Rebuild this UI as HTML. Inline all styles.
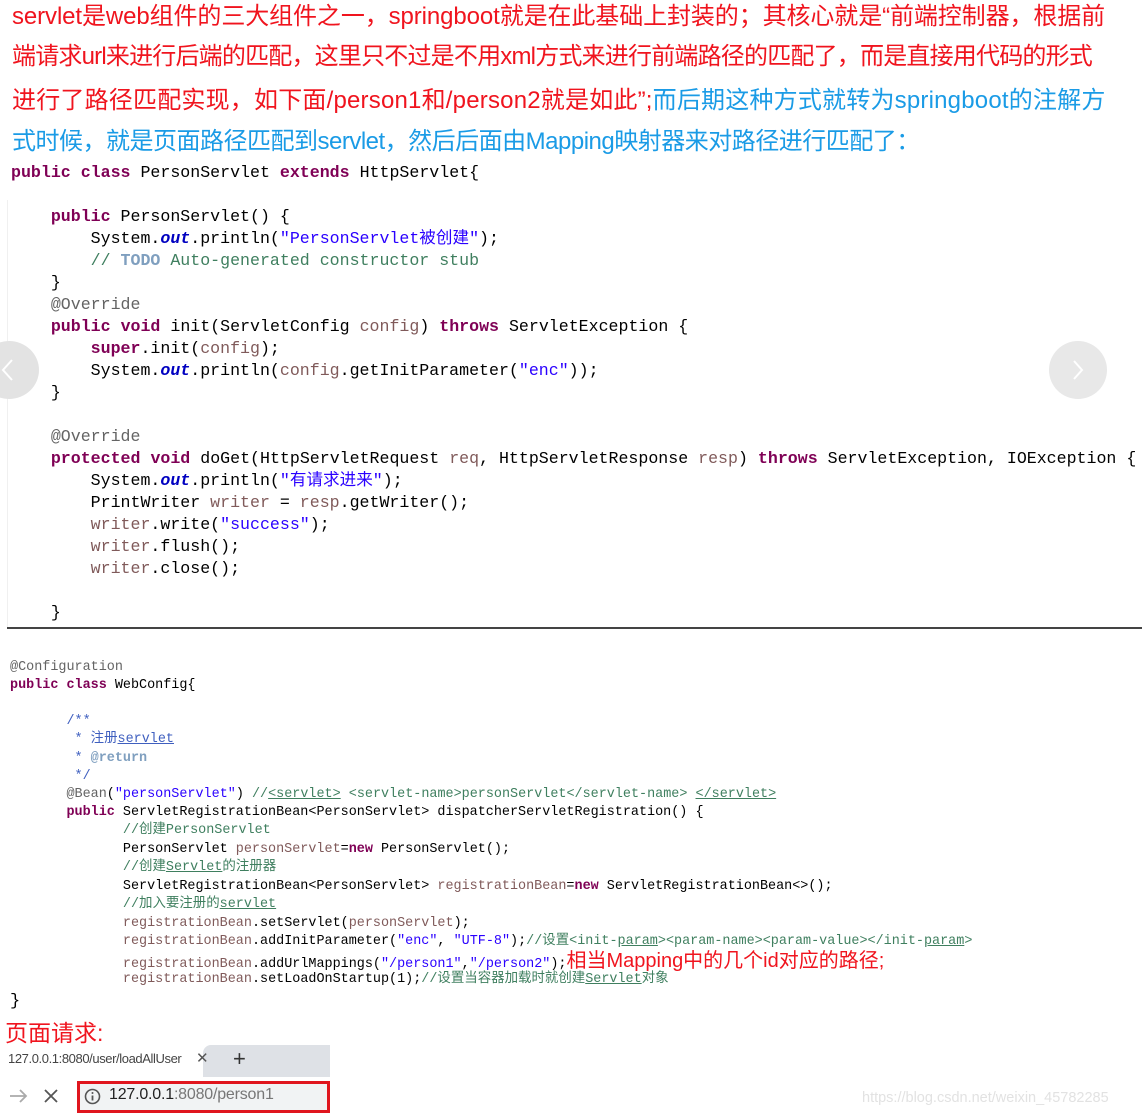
<!DOCTYPE html>
<html><head><meta charset="utf-8">
<style>
*{margin:0;padding:0;box-sizing:border-box}
body{width:1142px;height:1117px;background:#fff;position:relative;overflow:hidden;font-family:"Liberation Sans","Noto Sans CJK SC",sans-serif}
.h{position:absolute;left:12px;font-size:24px;white-space:nowrap;line-height:30px}
.r{color:#f0141e}.b{color:#1a9be6}
.c1{position:absolute;left:11px;font-family:"Liberation Mono","Noto Sans CJK SC",monospace;font-size:16.6px;line-height:22px;height:22px;white-space:pre;color:#000}
.c2{position:absolute;left:10px;font-family:"Liberation Mono","Noto Sans CJK SC",monospace;font-size:13.45px;line-height:18px;height:18px;white-space:pre;color:#000}
.k{color:#7f0055;font-weight:bold}
.s{color:#2a00ff}
.cm{color:#3f7f5f}
.f{color:#0000c0;font-style:italic;font-weight:bold}
.v{color:#6a3e3e;opacity:.85}
.a{color:#646464}
.jd{color:#3f5fbf}
.tg{color:#7f9fbf;font-weight:bold}
.u{text-decoration:underline}
.td{color:#7f9fbf;font-weight:bold}
</style></head><body>
<div class="h r" style="top:2px;letter-spacing:-0.1px">servlet是web组件的三大组件之一，springboot就是在此基础上封装的；其核心就是“前端控制器，根据前</div>
<div class="h r" style="top:42px;letter-spacing:-0.8px">端请求url来进行后端的匹配，这里只不过是不用xml方式来进行前端路径的匹配了，而是直接用代码的形式</div>
<div class="h" style="top:86px;letter-spacing:0.2px"><span class="r">进行了路径匹配实现，如下面/person1和/person2就是如此”;</span><span class="b">而后期这种方式就转为springboot的注解方</span></div>
<div class="h b" style="top:127px;letter-spacing:-0.5px">式时候，就是页面路径匹配到servlet，然后后面由Mapping映射器来对路径进行匹配了：</div>

<div style="position:absolute;left:7px;top:200px;width:1px;height:428px;background:#f0f0f0"></div>
<div class="c1" style="top:162px"><span class="k">public</span> <span class="k">class</span> PersonServlet <span class="k">extends</span> HttpServlet{</div>
<div class="c1" style="top:206px">    <span class="k">public</span> PersonServlet() {</div>
<div class="c1" style="top:228px">        System.<span class="f">out</span>.println(<span class="s">"PersonServlet被创建"</span>);</div>
<div class="c1" style="top:250px">        <span class="cm">// </span><span class="td">TODO</span><span class="cm"> Auto-generated constructor stub</span></div>
<div class="c1" style="top:272px">    }</div>
<div class="c1" style="top:294px">    <span class="a">@Override</span></div>
<div class="c1" style="top:316px">    <span class="k">public</span> <span class="k">void</span> init(ServletConfig <span class="v">config</span>) <span class="k">throws</span> ServletException {</div>
<div class="c1" style="top:338px">        <span class="k">super</span>.init(<span class="v">config</span>);</div>
<div class="c1" style="top:360px">        System.<span class="f">out</span>.println(<span class="v">config</span>.getInitParameter(<span class="s">"enc"</span>));</div>
<div class="c1" style="top:382px">    }</div>
<div class="c1" style="top:426px">    <span class="a">@Override</span></div>
<div class="c1" style="top:448px">    <span class="k">protected</span> <span class="k">void</span> doGet(HttpServletRequest <span class="v">req</span>, HttpServletResponse <span class="v">resp</span>) <span class="k">throws</span> ServletException, IOException {</div>
<div class="c1" style="top:470px">        System.<span class="f">out</span>.println(<span class="s">"有请求进来"</span>);</div>
<div class="c1" style="top:492px">        PrintWriter <span class="v">writer</span> = <span class="v">resp</span>.getWriter();</div>
<div class="c1" style="top:514px">        <span class="v">writer</span>.write(<span class="s">"success"</span>);</div>
<div class="c1" style="top:536px">        <span class="v">writer</span>.flush();</div>
<div class="c1" style="top:558px">        <span class="v">writer</span>.close();</div>
<div class="c1" style="top:602px">    }</div>
<div style="position:absolute;left:7px;top:627px;width:1135px;height:2px;background:#444"></div>

<div style="position:absolute;left:-21px;top:341px;width:60px;height:58px;border-radius:50%;background:#e3e3e3"></div>
<svg style="position:absolute;left:0;top:358px" width="20" height="26"><path d="M12 2 L3 12 L12 22" stroke="#fff" stroke-width="2" fill="none"/></svg>
<div style="position:absolute;left:1049px;top:341px;width:58px;height:58px;border-radius:50%;background:#e8e8e8"></div>
<svg style="position:absolute;left:1070px;top:359px" width="16" height="24"><path d="M4 2 L12 11 L4 20" stroke="#fff" stroke-width="2" fill="none"/></svg>

<div class="c2" style="top:659px"><span class="a">@Configuration</span></div>
<div class="c2" style="top:677px"><span class="k">public</span> <span class="k">class</span> WebConfig{</div>
<div class="c2" style="top:713px">       <span class="jd">/**</span></div>
<div class="c2" style="top:731px">        <span class="jd">* 注册<span class="u">servlet</span></span></div>
<div class="c2" style="top:750px">        <span class="jd">* </span><span class="tg">@return</span></div>
<div class="c2" style="top:768px">        <span class="jd">*/</span></div>
<div class="c2" style="top:786px">       <span class="a">@Bean</span>(<span class="s">"personServlet"</span>) <span class="cm">//<span class="u">&lt;servlet&gt;</span> &lt;servlet-name&gt;personServlet&lt;/servlet-name&gt; <span class="u">&lt;/servlet&gt;</span></span></div>
<div class="c2" style="top:804px">       <span class="k">public</span> ServletRegistrationBean&lt;PersonServlet&gt; dispatcherServletRegistration() {</div>
<div class="c2" style="top:822px">              <span class="cm">//创建PersonServlet</span></div>
<div class="c2" style="top:841px">              PersonServlet <span class="v">personServlet</span>=<span class="k">new</span> PersonServlet();</div>
<div class="c2" style="top:859px">              <span class="cm">//创建<span class="u">Servlet</span>的注册器</span></div>
<div class="c2" style="top:878px">              ServletRegistrationBean&lt;PersonServlet&gt; <span class="v">registrationBean</span>=<span class="k">new</span> ServletRegistrationBean&lt;&gt;();</div>
<div class="c2" style="top:896px">              <span class="cm">//加入要注册的<span class="u">servlet</span></span></div>
<div class="c2" style="top:915px">              <span class="v">registrationBean</span>.setServlet(<span class="v">personServlet</span>);</div>
<div class="c2" style="top:933px">              <span class="v">registrationBean</span>.addInitParameter(<span class="s">"enc"</span>, <span class="s">"UTF-8"</span>);<span class="cm">//设置&lt;init-<span class="u">param</span>&gt;&lt;param-name&gt;&lt;param-value&gt;&lt;/init-<span class="u">param</span>&gt;</span></div>
<div class="c2" style="top:952px">              <span class="v">registrationBean</span>.addUrlMappings(<span class="s">"/person1"</span>,<span class="s">"/person2"</span>);<span style="font-family:'Liberation Sans','Noto Sans CJK SC',sans-serif;font-size:20px;color:#f0141e;position:relative;top:0px">相当Mapping中的几个id对应的路径;</span></div>
<div class="c2" style="top:971px">              <span class="v">registrationBean</span>.setLoadOnStartup(1);<span class="cm">//设置当容器加载时就创建<span class="u">Servlet</span>对象</span></div>
<div class="c2" style="top:991px;font-size:17px;line-height:22px">}</div>

<div style="position:absolute;left:5px;top:1018px;font-size:23px;color:#f0141e;line-height:30px">页面请求:</div>
<div style="position:absolute;left:203px;top:1045px;width:127px;height:32px;background:#dee1e6;border-top-left-radius:8px"></div>
<div style="position:absolute;left:8px;top:1051px;font-size:13px;color:#444;white-space:nowrap;width:180px;overflow:hidden;letter-spacing:-0.4px">127.0.0.1:8080/user/loadAllUser</div>
<div style="position:absolute;left:196px;top:1049px;font-size:15px;color:#555">✕</div>
<div style="position:absolute;left:233px;top:1046px;font-size:22px;color:#333">+</div>
<svg style="position:absolute;left:8px;top:1087px" width="22" height="18"><path d="M2 9 H18 M12 3 L18 9 L12 15" stroke="#aaa" stroke-width="1.8" fill="none"/></svg>
<svg style="position:absolute;left:43px;top:1088px" width="16" height="16"><path d="M2 2 L14 14 M14 2 L2 14" stroke="#555" stroke-width="1.8"/></svg>
<div style="position:absolute;left:77px;top:1081px;width:253px;height:32px;border:3px solid #e0161e;background:#f1f3f4"></div>
<svg style="position:absolute;left:84px;top:1088px" width="17" height="17"><circle cx="8.5" cy="8.5" r="7" stroke="#555" stroke-width="1.6" fill="none"/><path d="M8.5 7.5 V12.5" stroke="#555" stroke-width="1.8"/><circle cx="8.5" cy="5" r="1" fill="#555"/></svg>
<div style="position:absolute;left:109px;top:1086px;font-size:16px;color:#222;letter-spacing:-0.2px">127.0.0.1<span style="color:#777">:8080/person1</span></div>
<div style="position:absolute;left:862px;top:1090px;font-size:14.5px;color:#e2e2e2;white-space:nowrap">https://blog.csdn.net/weixin_45782285</div>
</body></html>
